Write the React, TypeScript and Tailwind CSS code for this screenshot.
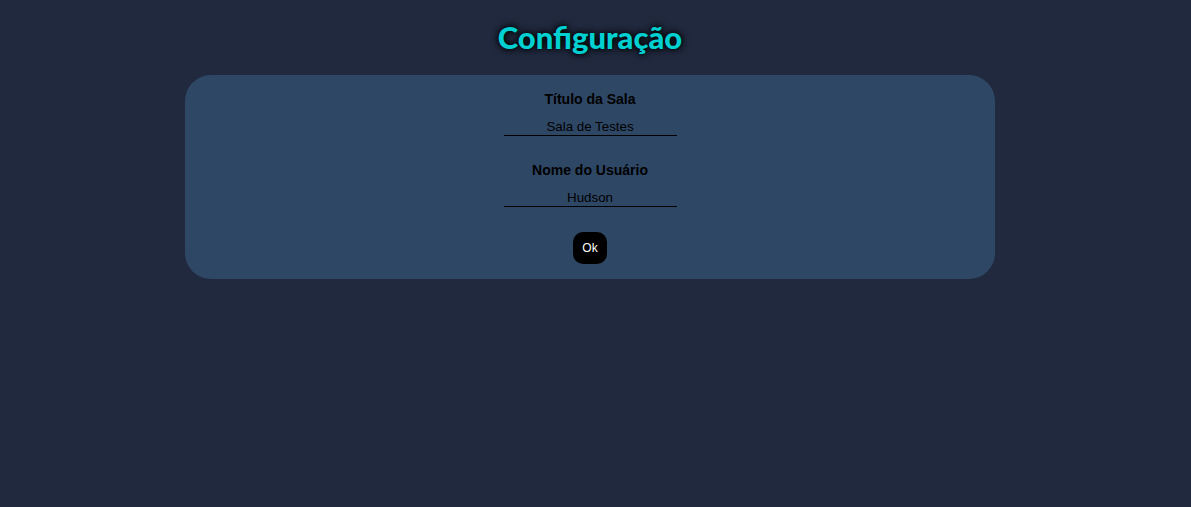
import React from "react";

export default function App() {
  return (
    <div className="min-h-[507px] w-full bg-[#20293e] pr-[11px]" style={{ fontFamily: '"Liberation Sans", Arial, sans-serif' }}>
      <div className="flex h-[75px] items-center justify-center">
        <h1
          className="text-[31px] font-black leading-none text-[#00d0d2] [text-shadow:0_0_5px_#000,0_0_9px_#000]"
          style={{ fontFamily: '"Lato", "Open Sans", sans-serif' }}
        >
          Configuração
        </h1>
      </div>
      <div className="mx-auto flex w-[810px] flex-col items-center rounded-[26px] bg-[#2e4765] pb-[15px] pt-[16px]">
        <label className="text-[14px] font-bold leading-[16px] text-black">Título da Sala</label>
        <input
          defaultValue="Sala de Testes"
          className="mt-[10px] h-[19px] w-[173px] border-b border-black bg-transparent text-center text-[13.33px] leading-[16px] text-black outline-none"
        />
        <label className="mt-[26px] text-[14px] font-bold leading-[16px] text-black">Nome do Usuário</label>
        <input
          defaultValue="Hudson"
          className="mt-[10px] h-[19px] w-[173px] border-b border-black bg-transparent text-center text-[13.33px] leading-[16px] text-black outline-none"
        />
        <button className="mt-[25px] h-[32px] w-[34px] rounded-[10px] bg-black text-[12px] text-white">Ok</button>
      </div>
    </div>
  );
}
